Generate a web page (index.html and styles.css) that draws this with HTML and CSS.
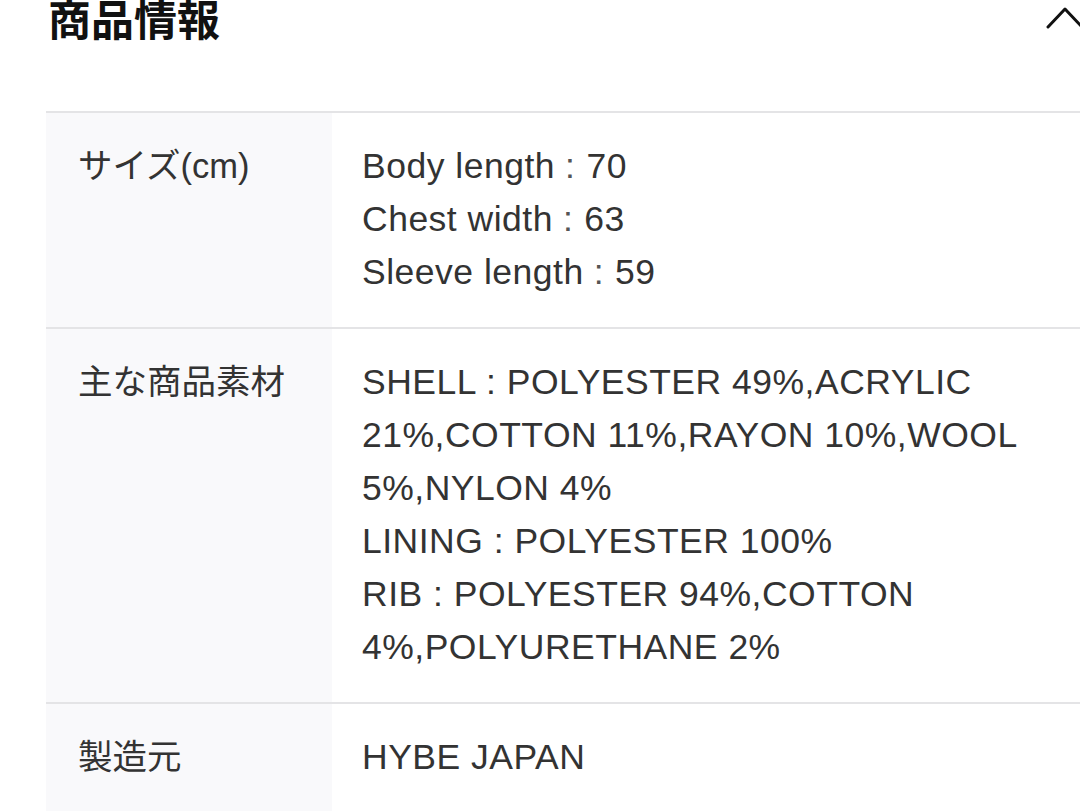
FILE: index.html
```html
<!DOCTYPE html>
<html lang="ja">
<head>
<meta charset="utf-8">
<title>商品情報</title>
<link rel="stylesheet" href="styles.css">
</head>
<body>
<div class="header">
  <h1 class="title">商品情報</h1>
  <svg class="chevron" width="40" height="24" viewBox="0 0 40 24"><path d="M3 21 L20 3 L37 21" fill="none" stroke="#111" stroke-width="3" stroke-linecap="round" stroke-linejoin="round"/></svg>
</div>
<div class="spec">
  <div class="row">
    <div class="label">サイズ(cm)</div>
    <div class="value">Body length<span class="colon">:</span>70<br>Chest width<span class="colon">:</span>63<br>Sleeve length<span class="colon">:</span>59</div>
  </div>
  <div class="row">
    <div class="label">主な商品素材</div>
    <div class="value">SHELL : POLYESTER 49%,ACRYLIC 21%,COTTON 11%,RAYON 10%,WOOL 5%,NYLON 4%<br>LINING : POLYESTER 100%<br>RIB : POLYESTER 94%,COTTON 4%,POLYURETHANE 2%</div>
  </div>
  <div class="row">
    <div class="label">製造元</div>
    <div class="value">HYBE JAPAN</div>
  </div>
</div>
</body>
</html>
```

FILE: styles.css
```css
html, body {
  margin: 0;
  padding: 0;
  background: #ffffff;
  overflow: hidden;
}
body {
  font-family: "Liberation Sans", "Noto Sans CJK JP", sans-serif;
  color: #333333;
  width: 1080px;
  height: 811px;
}
.header {
  display: flex;
  justify-content: space-between;
  align-items: flex-start;
  margin-top: -4px;
  margin-right: -5px;
  padding-left: 48px;
}
.title {
  margin: 0;
  font-family: "Noto Sans CJK JP", sans-serif;
  font-size: 43px;
  line-height: 43px;
  font-weight: 700;
  color: #111111;
}
.chevron {
  display: block;
  margin-top: 10px;
}
.spec {
  margin-top: 72px;
  margin-left: 46px;
  border-top: 2px solid #e4e4e6;
}
.row {
  display: grid;
  grid-template-columns: 286px 1fr;
  border-bottom: 2px solid #e4e4e6;
}
.label {
  background: #f9f9fb;
  padding: 27px 0 27px 32px;
  font-size: 34.5px;
  line-height: 53px;
  color: #333333;
}
.value {
  padding: 27px 30px 28px 30px;
  font-size: 35.5px;
  line-height: 53px;
  letter-spacing: 0.5px;
  color: #333333;
}
.colon {
  color: #555555;
  padding: 0 11px 0 10px;
}
```
